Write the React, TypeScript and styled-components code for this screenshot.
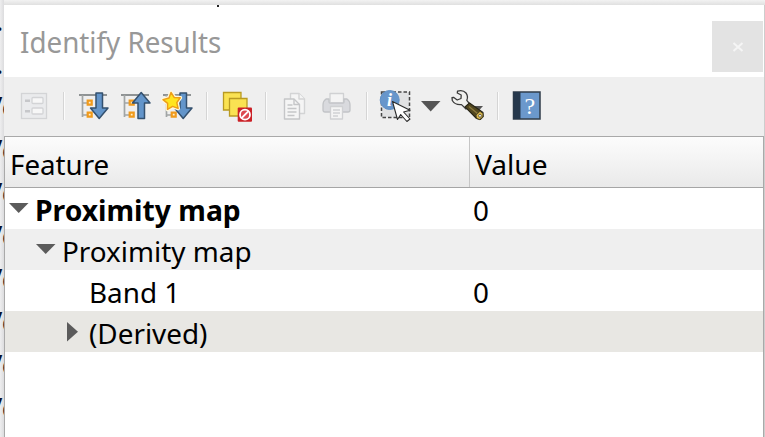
import React from "react";
import styled, { createGlobalStyle } from "styled-components";

const Global = createGlobalStyle`
  * { box-sizing: border-box; }
  body { margin: 0; overflow: hidden; background: #efefef; font-family: "Noto Sans", "Open Sans", sans-serif; }
  svg { display: block; }
`;

const Screen = styled.div`
  width: 765px;
  height: 437px;
  display: flex;
  overflow: hidden;
  background: #ededee;
`;

const Backdrop = styled.div`
  width: 4px;
  flex: none;
  overflow: hidden;
  background: linear-gradient(90deg, #eeeeef, #dcdcde);
`;

const BackdropLine = styled.div<{ $shift: number }>`
  height: 43px;
  line-height: 41px;
  font-size: 27px;
  color: #0a0f28;
  white-space: nowrap;
  text-indent: ${(p) => p.$shift}px;
`;

const Side = styled.div`
  flex: 1;
  min-width: 0;
  display: flex;
  flex-direction: column;
`;

const TopEdge = styled.div`
  height: 5px;
  flex: none;
  background: linear-gradient(#f2f2f2, #e0e0e0);
`;

const Panel = styled.div`
  flex: 1;
  display: flex;
  flex-direction: column;
  background: #fff;
  border-right: 1px solid #cdcdcd;
`;

const TitleBar = styled.div`
  height: 72px;
  flex: none;
  display: flex;
  align-items: flex-start;
  justify-content: space-between;
  padding: 16px 1px 0 16px;
  position: relative;
`;

const Speck = styled.i`
  position: absolute;
  left: 213px;
  top: 0;
  width: 2px;
  height: 2px;
  background: #222;
`;

const Label = styled.span<{ $scale?: number; $bold?: boolean; $size?: number; $color?: string }>`
  display: inline-block;
  transform-origin: 0 50%;
  transform: scaleX(${(p) => p.$scale ?? 0.995});
  font-size: ${(p) => p.$size ?? 28}px;
  font-weight: ${(p) => (p.$bold ? 700 : 400)};
  color: ${(p) => p.$color ?? "#000"};
  line-height: 41px;
  white-space: nowrap;
`;

const CloseButton = styled.button`
  width: 51px;
  height: 51px;
  padding: 0;
  border: 0;
  display: grid;
  place-items: center;
  background: #e3e3e3;
`;

const Toolbar = styled.div`
  height: 59px;
  flex: none;
  display: flex;
  align-items: flex-start;
  padding: 11px 0 0 14px;
  background: #efefef;
`;

const Tool = styled.div<{ $w?: number; $gap?: number }>`
  width: ${(p) => p.$w ?? 32}px;
  margin-right: ${(p) => p.$gap ?? 10}px;
  height: 36px;
  flex: none;
`;

const Separator = styled.div<{ $gap: number }>`
  width: 2px;
  height: 28px;
  margin: 4px ${(p) => p.$gap}px 0 0;
  flex: none;
  border-left: 1px solid #d5d5d5;
  background: #fcfcfc;
`;

const Tree = styled.div`
  flex: 1;
  border: 1px solid #a9a9a9;
  border-bottom: 0;
  background: #fff;
`;

const HeaderRow = styled.div`
  height: 51px;
  display: flex;
  background: linear-gradient(#fcfcfc, #f3f3f3 50%, #e9e9e9);
  border-bottom: 1px solid #a5a5a5;
`;

const HeaderCell = styled.div<{ $w?: number }>`
  width: ${(p) => (p.$w ? `${p.$w}px` : "auto")};
  padding: 7px 0 0 5px;
  border-right: ${(p) => (p.$w ? "1px solid #c6c6c6" : "0")};
`;

const Row = styled.div<{ $bg?: string }>`
  height: 41px;
  display: flex;
  background: ${(p) => p.$bg ?? "#fff"};

  ${Label} {
    line-height: 45px;
    height: 41px;
  }
`;

const FeatureCell = styled.div<{ $indent: number }>`
  width: 468px;
  flex: none;
  display: flex;
  padding-left: ${(p) => p.$indent}px;
`;

const Arrow = styled.div<{ $w: number }>`
  width: ${(p) => p.$w}px;
  padding-top: 11px;
  flex: none;
`;

const Expander = ({ kind, width = 27 }: { kind: "open" | "closed" | "none"; width?: number }) => (
  <Arrow $w={width}>
    {kind !== "none" && (
      <svg width="22" height="22" viewBox="0 0 22 22">
        <path d={kind === "open" ? "M0 4H19.5L9.7 14Z" : "M5 0V19.5L16 9.7Z"} fill="#5b5b5b" />
      </svg>
    )}
  </Arrow>
);

const FormIcon = () => (
  <svg width="32" height="36" viewBox="0 0 32 36" fill="none" stroke="#d3d4d6" strokeWidth="1.3">
    <rect x="3.5" y="5.5" width="25" height="25" fill="#eaebed" />
    <rect x="14" y="9.5" width="11" height="6" rx="1" fill="#f7f7f7" />
    <rect x="14" y="20" width="11" height="6" rx="1" fill="#f7f7f7" />
    <path d="M7 12.8h5M7 23.2h5" stroke="#c6c7ca" strokeWidth="2.5" />
  </svg>
);

const Branches = () => (
  <g fill="none">
    <path d="M1 7H29" stroke="#8f9394" strokeWidth="2" />
    <path d="M4.5 7V29M4.5 15H9M4.5 27H9" stroke="#a1a5a5" strokeWidth="1.7" />
    <path d="M9.7 12.7h4v4h-4zM9.7 24.7h4v4h-4z" fill="#fff1cd" stroke="#f09a1c" strokeWidth="2.2" />
  </g>
);

const DOWN = "M18 5H24.5V20H30L21.2 30.5L12.5 20H18Z";
const UP = "M18 30.5H24.5V15H30L21.2 4.5L12.5 15H18Z";
const STAR = "M9 4.5L12.2 9.4L18.2 9.7L14.8 14.6L16.1 20.4L10.6 18.4L5.5 21.3L5.6 15.3L1 11.6L7 10Z";

const TreeIcon = ({ d, star }: { d: string; star?: boolean }) => (
  <svg width="32" height="36" viewBox="0 0 32 36" overflow="visible">
    <Branches />
    <path d={d} fill="#6395ca" stroke="#34516f" strokeWidth="1.5" strokeLinejoin="round" />
    {star && (
      <g strokeLinejoin="round">
        <path d={STAR} fill="#fffbe8" stroke="#fff8dc" strokeWidth="4" />
        <path d={STAR} fill="#ffe51f" stroke="#ee9e16" strokeWidth="1.5" />
      </g>
    )}
  </svg>
);

const DeselectIcon = () => (
  <svg width="32" height="36" viewBox="0 0 32 36">
    <g fill="#fae252" stroke="#b99a22" strokeWidth="1.3">
      <path d="M2.5 4.5H20V22H2.5Z" />
      <path d="M8.5 10.5H26V28H8.5Z" />
    </g>
    <rect x="16.7" y="19.5" width="14.3" height="14.3" rx="1" fill="#cb2026" />
    <circle cx="24" cy="26.7" r="5" fill="#dc4a50" stroke="#fff" strokeWidth="1.8" />
    <path d="M20.5 30.2L27.5 23.2" stroke="#fff" strokeWidth="1.9" />
  </svg>
);

const CopyIcon = () => (
  <svg width="32" height="36" viewBox="0 0 32 36" fill="#f5f5f5" stroke="#c5c6c8" strokeWidth="1.4" strokeLinejoin="round">
    <path d="M11.5 5.5H20L25.5 11V25.5H11.5Z" stroke="#d3d4d5" />
    <path d="M20 5.5V11H25.5" stroke="#d3d4d5" />
    <path d="M5.5 11H15L20.5 16.5V31H5.5Z" />
    <path d="M15 11V16.5H20.5M8.5 17h5M8.5 20.5h9M8.5 24h9M8.5 27.5h7" fill="none" />
  </svg>
);

const PrintIcon = () => (
  <svg width="32" height="36" viewBox="0 0 32 36" fill="#f4f4f4" stroke="#d0d1d3" strokeWidth="1.3" strokeLinejoin="round">
    <path d="M9 14V5.5H22.5V14" />
    <path d="M5 11H8V14Q8 15 9 15H22Q23 15 23 14V11H26Q29 13 29 17V22Q29 24 27 24H4Q2 24 2 22V17Q2 13 5 11Z" fill="#d9dade" stroke="#c2c4c7" />
    <path d="M9.5 18.5H21.5V31H9.5Z" />
    <path d="M12 22h7M12 25h7M12 28h5" />
  </svg>
);

const InfoGlyph = styled.text`
  font: italic bold 18px "Liberation Serif", serif;
  fill: #fff;
`;

const IdentifyIcon = () => (
  <svg width="34" height="36" viewBox="0 0 34 36">
    <path d="M2.5 4H30.5V29.5H2.5Z" fill="#e1e2e3" stroke="#464646" strokeWidth="1.5" strokeDasharray="3.5 2" />
    <circle cx="10.7" cy="12" r="9.5" fill="#6796cb" stroke="#5f90c6" strokeWidth="1" />
    <InfoGlyph x="8" y="17.5">i</InfoGlyph>
    <path d="M13.5 13.5L31 22.3L24.6 24L31 31L27.9 33.5L21.7 26.5L18.5 31.5Z" fill="#fff" stroke="#2c2c2c" strokeWidth="1.1" strokeLinejoin="round" />
  </svg>
);

const WrenchIcon = () => (
  <svg width="36" height="36" viewBox="0 0 36 36">
    <path d="M16 18H34L25 28Z" fill="#555" />
    <path
      d="M8.5 3.2Q14 1.6 17 5Q19.5 8.5 17.8 12.3L22 17.5L17 21L12.5 16.6Q6 17.2 3.3 12.5L3 9.7L4.5 9.3L8.2 12L12 10.5L12.2 7L8.3 5Z"
      fill="#f0f0ee" stroke="#3a3a3a" strokeWidth="1.3" strokeLinejoin="round"
    />
    <path d="M16 18.8L20.5 15L34 24.5L34.2 28.5L31.2 31.5L27.5 30.5Z" fill="#51471f" stroke="#272416" strokeWidth="1.1" strokeLinejoin="round" />
    <path d="M20 18.5L28.5 25.5" stroke="#8c793d" strokeWidth="1.3" />
    <path d="M27 27L31 23.3L34 25.5L33.8 29L30.7 31.6L27.5 30.3Z" fill="#d8b64c" stroke="#3e371c" strokeWidth="0.8" />
    <circle cx="31" cy="27.8" r="1.4" fill="#fff" stroke="#3d381f" strokeWidth=".7" />
  </svg>
);

const HelpGlyph = styled.text`
  font: 24px "Liberation Serif", serif;
  fill: #fff;
`;

const HelpIcon = () => (
  <svg width="32" height="36" viewBox="0 0 32 36">
    <rect x="2.5" y="4" width="26.5" height="27" fill="#6b98cc" stroke="#303c49" strokeWidth="1.5" />
    <rect x="2.5" y="4" width="7" height="27" fill="#26384c" />
    <HelpGlyph x="13.5" y="25.5">?</HelpGlyph>
  </svg>
);

export default function App() {
  return (
    <Screen>
      <Global />
      <Backdrop>
        <BackdropLine $shift={-4}>.e</BackdropLine>
        <BackdropLine $shift={-4}>.e</BackdropLine>
        {Array.from({ length: 8 }, (_, i) => (
          <BackdropLine key={i} $shift={-14}>Ve</BackdropLine>
        ))}
      </Backdrop>
      <Side>
        <TopEdge />
        <Panel>
          <TitleBar>
            <Speck />
            <Label $size={29} $scale={0.957} $color="#989898">Identify Results</Label>
            <CloseButton aria-label="Close">
              <svg width="12" height="12" viewBox="0 0 12 12">
                <path d="M1.5 2L10.5 10M10.5 2L1.5 10" stroke="#f5f5f5" strokeWidth="2" />
              </svg>
            </CloseButton>
          </TitleBar>
          <Toolbar>
            <Tool $gap={13}><FormIcon /></Tool>
            <Separator $gap={13} />
            <Tool><TreeIcon d={DOWN} /></Tool>
            <Tool><TreeIcon d={UP} /></Tool>
            <Tool $gap={12}><TreeIcon d={DOWN} star /></Tool>
            <Separator $gap={13} />
            <Tool $gap={12}><DeselectIcon /></Tool>
            <Separator $gap={12} />
            <Tool><CopyIcon /></Tool>
            <Tool $gap={13}><PrintIcon /></Tool>
            <Separator $gap={11} />
            <Tool $w={34} $gap={7}><IdentifyIcon /></Tool>
            <Tool $w={22} $gap={7}>
              <svg width="22" height="36" viewBox="0 0 22 36"><path d="M1 13H20.5L10.7 23.5Z" fill="#555" /></svg>
            </Tool>
            <Tool $w={36} $gap={12}><WrenchIcon /></Tool>
            <Separator $gap={12} />
            <Tool><HelpIcon /></Tool>
          </Toolbar>
          <Tree>
            <HeaderRow>
              <HeaderCell $w={465}><Label $scale={0.99}>Feature</Label></HeaderCell>
              <HeaderCell><Label $scale={1.005}>Value</Label></HeaderCell>
            </HeaderRow>
            <Row>
              <FeatureCell $indent={4}><Expander kind="open" width={26} /><Label $bold $scale={1.01}>Proximity map</Label></FeatureCell>
              <Label>0</Label>
            </Row>
            <Row $bg="#efefef">
              <FeatureCell $indent={31}><Expander kind="open" width={26} /><Label>Proximity map</Label></FeatureCell>
            </Row>
            <Row>
              <FeatureCell $indent={57}><Expander kind="none" /><Label>Band 1</Label></FeatureCell>
              <Label>0</Label>
            </Row>
            <Row $bg="#e8e7e3">
              <FeatureCell $indent={57}><Expander kind="closed" /><Label>(Derived)</Label></FeatureCell>
            </Row>
          </Tree>
        </Panel>
      </Side>
    </Screen>
  );
}
